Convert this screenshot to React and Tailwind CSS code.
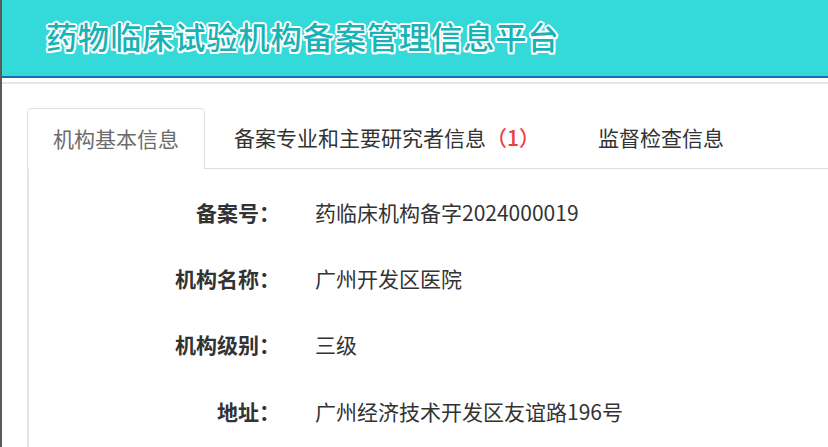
import React from 'react';

const ROWS = [
  { label: '备案号：', value: '药临床机构备字2024000019' },
  { label: '机构名称：', value: '广州开发区医院' },
  { label: '机构级别：', value: '三级' },
  { label: '地址：', value: '广州经济技术开发区友谊路196号' },
];

const TITLE_SHADOW =
  '[text-shadow:2px_0_0_#fff,-2px_0_0_#fff,0_2px_0_#fff,0_-2px_0_#fff,1.5px_1.5px_0_#fff,-1.5px_-1.5px_0_#fff,1.5px_-1.5px_0_#fff,-1.5px_1.5px_0_#fff]';

export default function App() {
  return (
    <div className="flex h-[447px] w-[828px] overflow-hidden bg-white font-['Noto_Sans_CJK_SC','Noto_Sans',sans-serif]">
      {/* window edge */}
      <div className="w-[2px] flex-shrink-0 bg-[#5a5a5a]" />

      <div className="flex min-w-0 flex-1 flex-col">
        {/* Header */}
        <header className="flex h-[78px] flex-shrink-0 items-center border-b-2 border-[#1670b0] bg-[#34dad9] pb-[5px] pl-[44px]">
          <h1 className={`text-[31px] font-medium leading-none tracking-[1.1px] text-[#17b3b6] ${TITLE_SHADOW}`}>
            药物临床试验机构备案管理信息平台
          </h1>
        </header>
        <div className="mt-[4px] h-[2px] flex-shrink-0 bg-[#e6e6e6]" />

        {/* Content */}
        <main className="flex flex-1 flex-col pl-[25px] pt-[24px]">
          {/* Tabs */}
          <div className="flex h-[61px] items-stretch">
            <div className="flex items-center rounded-t-[5px] border border-b-0 border-[#dddddd] bg-white px-[25px] text-[21px] text-[#6b6b6b]">
              机构基本信息
            </div>
            <div className="flex flex-1 items-center border-b border-[#dddddd] text-[21px] text-[#333]">
              <span className="pl-[29px]">
                备案专业和主要研究者信息<span className="font-medium text-[#f03c3c]">（1）</span>
              </span>
              <span className="pl-[58px]">监督检查信息</span>
            </div>
          </div>

          {/* Detail card */}
          <div className="flex-1 border-l-2 border-[#e4e4e4] pt-[10px]">
            {ROWS.map((r) => (
              <div key={r.label} className="flex h-[66.3px] items-center text-[21px] leading-none">
                <div className="w-[251px] text-right font-bold text-[#333]">{r.label}</div>
                <div className="pl-[35px] text-[#333]">{r.value}</div>
              </div>
            ))}
          </div>
        </main>
      </div>
    </div>
  );
}
